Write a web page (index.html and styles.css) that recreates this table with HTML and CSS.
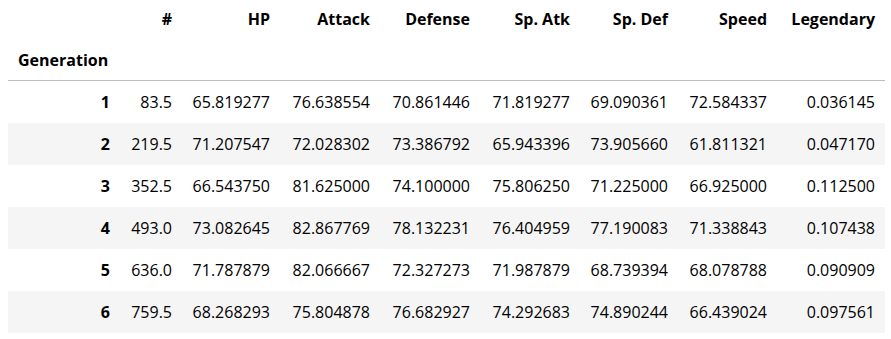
FILE: index.html
```html
<!DOCTYPE html>
<html lang="en">
<head>
  <meta charset="UTF-8"/>
  <title>Generation means</title>
  <link rel="stylesheet" href="styles.css">
</head>
<body>
  <table class="dataframe">
    <colgroup>
      <col class="c-idx"><col class="c-num"><col class="c-hp"><col class="c-std"><col class="c-std">
      <col class="c-std"><col class="c-hp"><col class="c-speed"><col class="c-leg">
    </colgroup>
    <thead>
      <tr>
        <th></th><th>#</th><th>HP</th><th>Attack</th><th>Defense</th>
        <th>Sp. Atk</th><th>Sp. Def</th><th>Speed</th><th>Legendary</th>
      </tr>
      <tr class="names">
        <th class="idx-name">Generation</th><th></th><th></th><th></th><th></th>
        <th></th><th></th><th></th><th></th>
      </tr>
    </thead>
    <tbody>
      <tr><th>1</th><td>83.5</td><td>65.819277</td><td>76.638554</td><td>70.861446</td><td>71.819277</td><td>69.090361</td><td>72.584337</td><td>0.036145</td></tr>
      <tr><th>2</th><td>219.5</td><td>71.207547</td><td>72.028302</td><td>73.386792</td><td>65.943396</td><td>73.905660</td><td>61.811321</td><td>0.047170</td></tr>
      <tr><th>3</th><td>352.5</td><td>66.543750</td><td>81.625000</td><td>74.100000</td><td>75.806250</td><td>71.225000</td><td>66.925000</td><td>0.112500</td></tr>
      <tr><th>4</th><td>493.0</td><td>73.082645</td><td>82.867769</td><td>78.132231</td><td>76.404959</td><td>77.190083</td><td>71.338843</td><td>0.107438</td></tr>
      <tr><th>5</th><td>636.0</td><td>71.787879</td><td>82.066667</td><td>72.327273</td><td>71.987879</td><td>68.739394</td><td>68.078788</td><td>0.090909</td></tr>
      <tr><th>6</th><td>759.5</td><td>68.268293</td><td>75.804878</td><td>76.682927</td><td>74.292683</td><td>74.890244</td><td>66.439024</td><td>0.097561</td></tr>
    </tbody>
  </table>
</body>
</html>
```

FILE: styles.css
```css
/* Reset */
* { box-sizing: border-box; margin: 0; padding: 0; }
html, body { background: #fff; }
body { font-family: 'Open Sans', 'Noto Sans', sans-serif; font-size: 16px; color: #000; }

/* Tabla estilo dataframe */
.dataframe {
  margin-left: 8px;
  border-collapse: collapse;
  table-layout: fixed;
  width: 877px;
}
.c-idx   { width: 112px; }
.c-num   { width: 62px; }
.c-hp    { width: 98px; }
.c-std   { width: 100px; }
.c-speed { width: 99px; }
.c-leg   { width: 108px; }

.dataframe th,
.dataframe td {
  padding: 9px 10px;
  line-height: 22px;
  text-align: right;
  white-space: nowrap;
  vertical-align: middle;
}
.dataframe th { font-weight: bold; }

.dataframe thead tr:first-child th { padding-top: 8px; padding-bottom: 10px; }
.dataframe thead tr.names th { border-bottom: 1px solid #bdbdbd; padding-top: 9px; padding-bottom: 9px; }
.dataframe .idx-name { text-align: left; }

.dataframe tbody th,
.dataframe tbody td { padding-top: 10px; padding-bottom: 10px; }
.dataframe tbody tr:nth-child(even) { background: #f5f5f5; }
```
